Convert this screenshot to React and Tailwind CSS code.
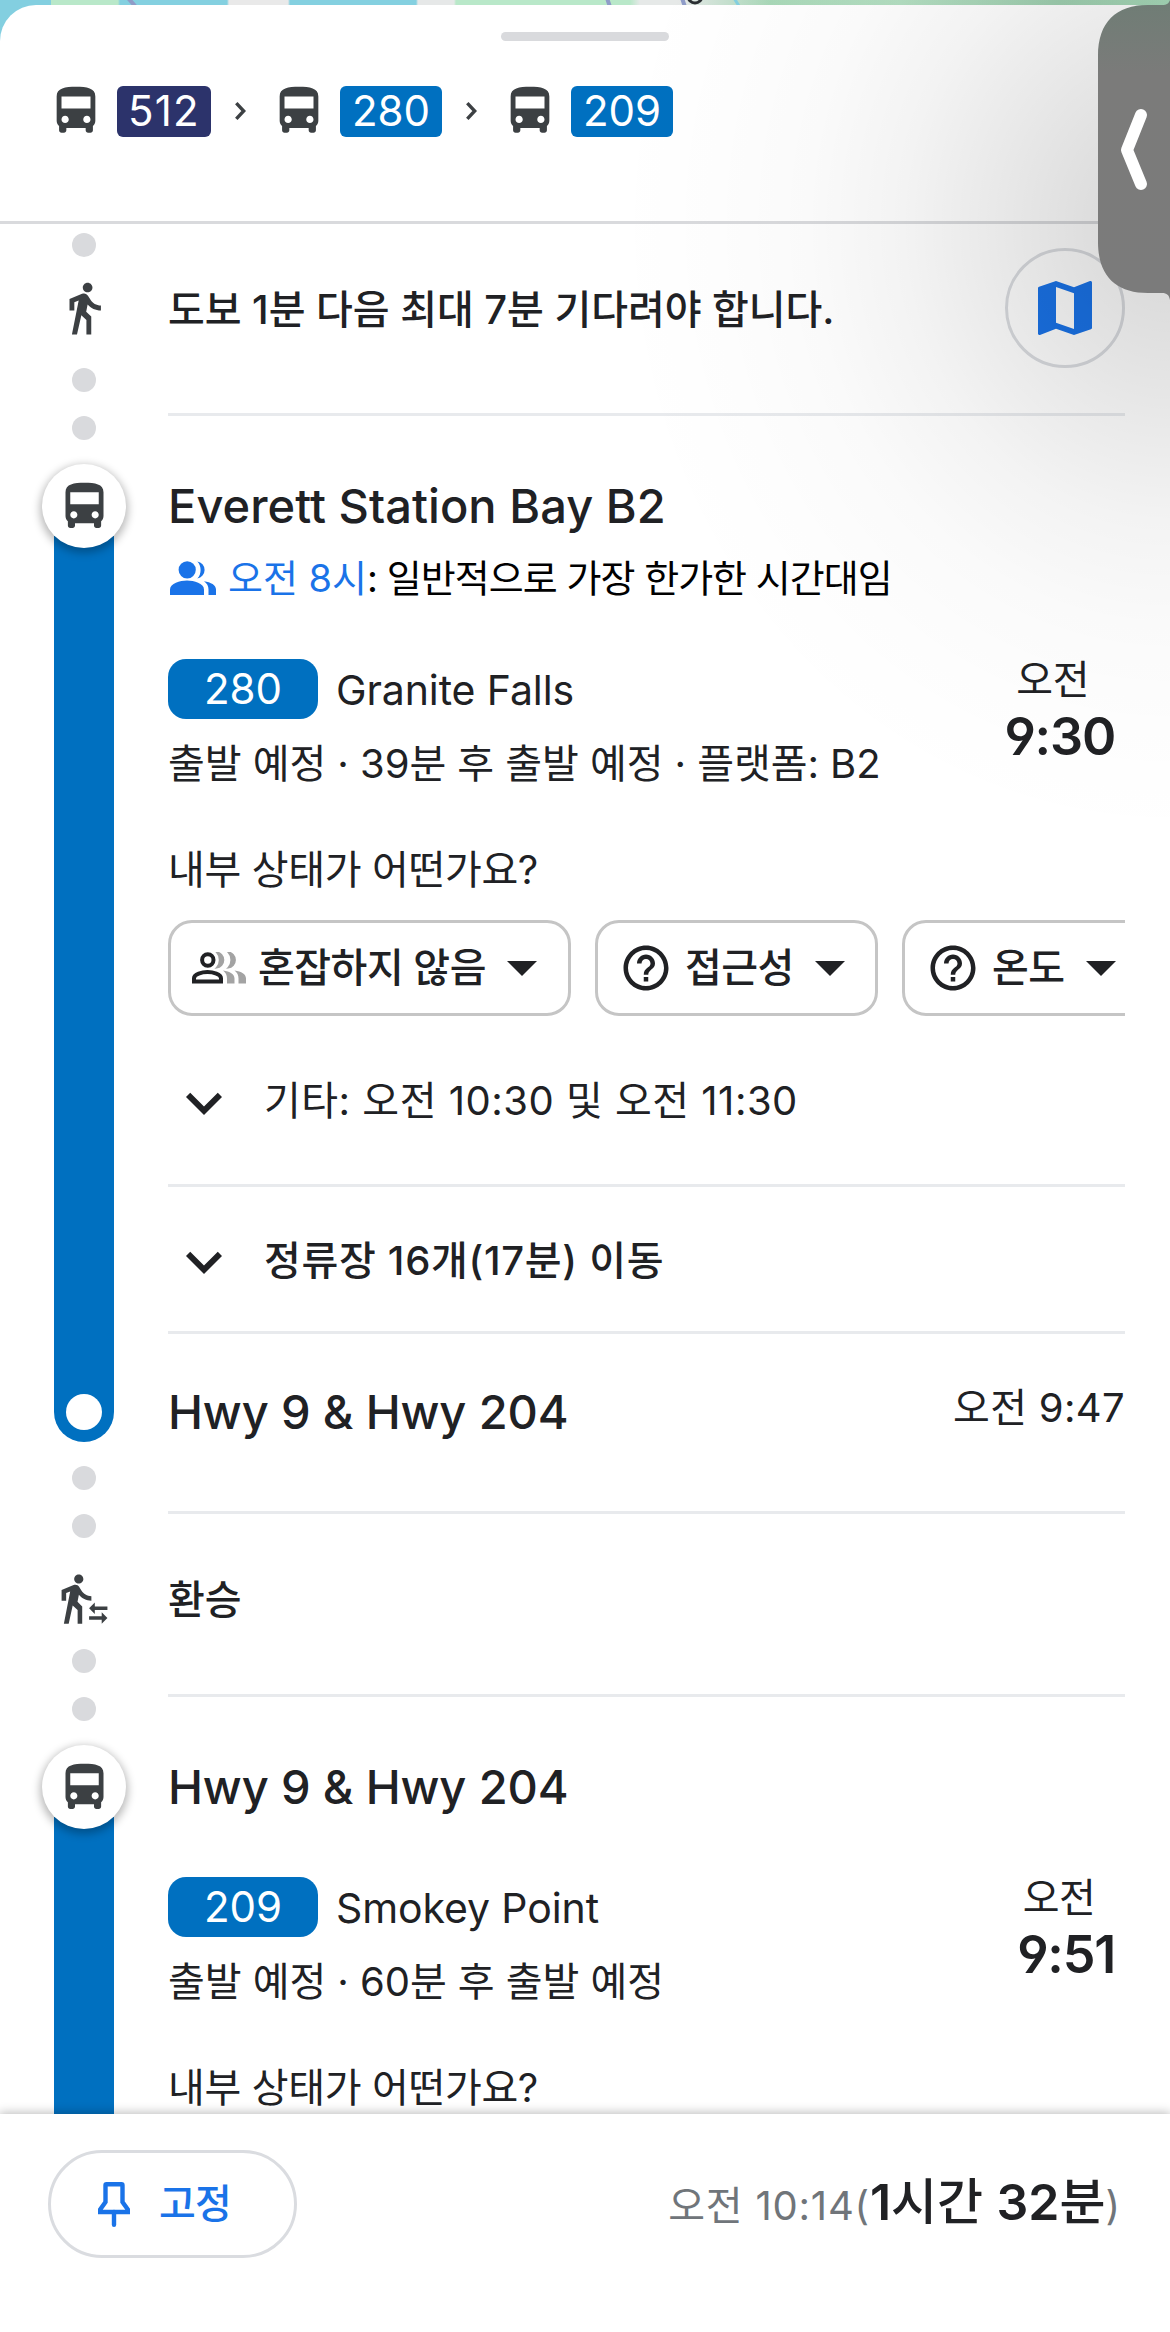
import React from "react";
import { MdExpandMore, MdHelpOutline, MdMap } from "react-icons/md";

/* ---------- icons ---------- */

const BusIcon = ({ className }) => (
  <svg viewBox="0 0 24 24" className={`shrink-0 ${className}`} fill="#3c4043">
    <path d="M4 16c0 .88.39 1.67 1 2.22V20c0 .55.45 1 1 1h1c.55 0 1-.45 1-1v-1h8v1c0 .55.45 1 1 1h1c.55 0 1-.45 1-1v-1.780c.61-.55 1-1.340 1-2.220V6c0-3.500-3.580-4-8-4s-8 .5-8 4v10zm3.500 1c-.83 0-1.500-.67-1.500-1.500S6.670 14 7.500 14s1.500.67 1.500 1.500S8.330 17 7.500 17zm9 0c-.83 0-1.500-.67-1.500-1.500s.67-1.500 1.500-1.500 1.500.67 1.500 1.500-.67 1.500-1.500 1.500zm1.500-6H6V6h12v5z" />
  </svg>
);

const WalkIcon = ({ className }) => (
  <svg viewBox="0 0 24 24" className={`shrink-0 ${className}`} fill="#3c4043">
    <path d="M13.500 5.500c1.100 0 2-.9 2-2s-.9-2-2-2-2 .9-2 2 .9 2 2 2zM9.800 8.900 7 23h2.100l1.800-8 2.100 2v6h2v-7.500l-2.100-2 .6-3C14.800 12 16.800 13 19 13v-2c-1.900 0-3.500-1-4.300-2.400l-1-1.600c-.4-.6-1-1-1.700-1-.3 0-.5.1-.8.1L6 8.300V13h2V9.600l1.800-.7" />
  </svg>
);

const TransferIcon = () => (
  <svg viewBox="0 0 24 24" className="h-[55px] w-[55px]" fill="#3c4043">
    <path d="M16.49 15.5v-1.75L14 16.25l2.49 2.5V17H22v-1.5zm3.02 4.25H14v1.5h5.51V23L22 20.5 19.51 18zM9.5 5.5c1.1 0 2-.9 2-2s-.9-2-2-2-2 .9-2 2 .9 2 2 2zM5.75 8.9 3 23h2.1l1.75-8L9 17v6h2v-7.55L8.95 13.4l.6-3C10.85 12 12.8 13 15 13v-2c-1.85 0-3.45-1-4.35-2.45l-.95-1.6C9.35 6.35 8.7 6 8 6c-.25 0-.5.05-.75.15L2 8.3V13h2V9.65l1.75-.75" />
  </svg>
);

const GroupIcon = () => (
  <svg viewBox="0 0 46 34" className="h-[34px] w-[46px] shrink-0" fill="#1a73e8">
    <circle cx="17.2" cy="8.8" r="8.6" />
    <path d="M27.3.4a8.6 8.6 0 0 1 0 17c2.3-2.2 3.3-5.3 3.3-8.5s-1-6.3-3.3-8.5z" />
    <path d="M0 34v-5.5c0-6 10-8.9 17-8.9s17 2.9 17 8.9V34z" />
    <path d="M34 20.2c7 1 12 3.8 12 8.3V34h-7.5v-5.5c0-3.4-1.6-6.3-4.5-8.3z" />
  </svg>
);

const CrowdIcon = () => (
  <svg viewBox="0 0 54 32" className="h-8 w-[54px] shrink-0" fill="none">
    <circle cx="15.8" cy="8" r="5.7" stroke="#202124" strokeWidth="4" />
    <path d="M2 29.4v-3.1c0-4 8-6.2 13.500-6.2S29 22.300 29 26.300v3.100z" stroke="#202124" strokeWidth="4" />
    <g fill="#a3a3a3">
      <path d="M24.600.2a7.800 7.800 0 0 1 0 15.500c2-2 3-4.700 3-7.700s-1-5.800-3-7.800z" strokeWidth="1.6" stroke="#a3a3a3" />
      <path d="M36.200.2a7.800 7.800 0 0 1 0 15.500c2-2 3-4.700 3-7.700s-1-5.800-3-7.800z" strokeWidth="1.6" stroke="#a3a3a3" />
      <path d="M31 18.500c7 1 11.500 3.500 11.500 8v5h-7.500v-5c0-3.200-1.200-6-4-8z" />
      <path d="M42.500 18.500c7 1 11.500 3.500 11.500 8v5h-7.500v-5c0-3.200-1.200-6-4-8z" />
    </g>
  </svg>
);

const Caret = () => (
  <svg viewBox="0 0 30 15" className="h-[15px] w-[30px] shrink-0" fill="#202124">
    <path d="M0 0h30L15 15z" />
  </svg>
);

const PinIcon = () => (
  <svg viewBox="0 0 32 45" className="h-[45px] w-8 shrink-0" fill="none" stroke="#1a73e8" strokeWidth="4.4">
    <path d="M8.500 2.300h15q1 0 1 1V20l5.300 7.500V30H2.200v-2.500L7.500 20V3.300q0-1 1-1z" />
    <path d="M16 30v12.800" strokeLinecap="round" />
  </svg>
);

const Separator = () => (
  <div className="flex w-[59px] justify-center">
    <svg viewBox="0 0 11 18" className="h-[18px] w-[11px]" fill="none" stroke="#3c4043" strokeWidth="3.4">
      <path d="M1.300 1.200 8.700 9l-7.400 7.800" />
    </svg>
  </div>
);

/* ---------- header ---------- */

const HeaderLeg = ({ children, className }) => (
  <div className="flex items-center gap-3">
    <BusIcon className="h-[58px] w-[58px]" />
    <span
      className={`flex h-[51px] items-center justify-center rounded-[6px] text-[42px] leading-none text-white ${className}`}
    >
      {children}
    </span>
  </div>
);

const Header = () => (
  <header className="flex h-[219px] flex-col border-b-[3px] border-[#d9dadd]">
    <div className="mt-[27px] h-[9px] w-[168px] self-center rounded-full bg-[#d9dadd]" />
    <div className="mt-[41px] flex items-center pl-[47px]">
      <HeaderLeg className="w-[94px] bg-[#2c336b] tracking-[1.2px]">512</HeaderLeg>
      <Separator />
      <HeaderLeg className="w-[102px] bg-[#0070c0]">280</HeaderLeg>
      <Separator />
      <HeaderLeg className="w-[102px] bg-[#0070c0]">209</HeaderLeg>
    </div>
  </header>
);

/* ---------- timeline rail ---------- */

const Dot = ({ className }) => (
  <div className={`h-6 w-6 shrink-0 rounded-full bg-[#d9dadd] ${className}`} />
);

const StopMarker = () => (
  <div className="z-10 mt-6 flex h-[84px] w-[84px] shrink-0 items-center justify-center rounded-full bg-white shadow-[0_3px_9px_2px_rgba(0,0,0,0.28)]">
    <BusIcon className="h-[57px] w-[57px]" />
  </div>
);

const Rail = () => (
  <div className="flex w-[168px] shrink-0 flex-col items-center">
    <Dot className="mt-[9px]" />
    <WalkIcon className="mt-[22px] h-[58px] w-[58px]" />
    <Dot className="mt-[31px]" />
    <Dot className="mt-6" />
    <StopMarker />
    <div className="-mt-3 flex h-[906px] w-[60px] shrink-0 items-end justify-center rounded-b-full bg-[#0070c0] pb-3">
      <div className="h-9 w-9 rounded-full bg-white" />
    </div>
    <Dot className="mt-6" />
    <Dot className="mt-6" />
    <div className="flex h-[111px] shrink-0 items-center pb-1 pt-[13px]">
      <TransferIcon />
    </div>
    <Dot className="mt-0" />
    <Dot className="mt-6" />
    <StopMarker />
    <div className="-mt-3 w-[60px] grow bg-[#0070c0]" />
  </div>
);

/* ---------- content ---------- */

const Divider = () => <div className="h-[3px] shrink-0 bg-[#e8eaed]" />;

const StopTitle = ({ children, className }) => (
  <h2 className={`h-[60px] text-[47px] font-medium leading-[60px] ${className}`}>{children}</h2>
);

const Departure = ({ line, destination, status, time }) => (
  <div className="flex justify-between">
    <div>
      <div className="flex h-[60px] items-center">
        <span className="flex h-[60px] w-[150px] items-center justify-center rounded-[18px] bg-[#0070c0] text-[42px] leading-none text-white">
          {line}
        </span>
        <span className="ml-[18px] pt-[2px] text-[41px] leading-none tracking-[-0.1px]">{destination}</span>
      </div>
      <p className="mt-5 h-[50px] text-[40px] leading-[50px] tracking-[-0.06px]">{status}</p>
    </div>
    <div className="mr-[10px] flex flex-col items-center">
      <span className="-mt-1 h-[50px] pr-[14px] text-[40px] leading-[50px] tracking-[-0.4px]">오전</span>
      <span className="mt-[2px] h-[60px] text-[52px] font-semibold leading-[60px] tracking-[-1.2px] [font-feature-settings:'cv04']">
        {time}
      </span>
    </div>
  </div>
);

const Question = () => (
  <p className="mt-14 h-[50px] text-[40px] leading-[50px] tracking-[-0.35px]">내부 상태가 어떤가요?</p>
);

const Chip = ({ icon, label, className, labelClass }) => (
  <button
    className={`flex h-24 shrink-0 items-center gap-3 rounded-[24px] border-[3px] border-[#c5c5c5] pl-[21px] text-[40px] font-medium leading-none tracking-[-0.5px] ${className}`}
  >
    {icon}
    <span className={`whitespace-nowrap ${labelClass}`}>{label}</span>
    <Caret />
  </button>
);

const HelpIcon = () => <MdHelpOutline className="h-[54px] w-[54px] shrink-0 text-[#202124]" />;

const ExpandRow = ({ children, className }) => (
  <div className={`flex items-center ${className}`}>
    <MdExpandMore className="mt-[3px] h-[72px] w-[72px] shrink-0 text-[#202124]" />
    {children}
  </div>
);

const Content = () => (
  <div className="flex w-[957px] shrink-0 flex-col">
    <div className="flex h-[189px] items-center justify-between pb-[18px]">
      <p className="text-[40px] font-medium leading-none tracking-[-0.05px]">도보 1분 다음 최대 7분 기다려야 합니다.</p>
      <button className="mb-[3px] flex h-[120px] w-[120px] items-center justify-center rounded-full border-[3px] border-[#dadce0]">
        <MdMap className="h-[72px] w-[72px] text-[#1a73e8]" />
      </button>
    </div>
    <Divider />

    <StopTitle className="mt-[60px] tracking-[0.05px]">Everett Station Bay B2</StopTitle>
    <div className="mt-[17px] flex h-[50px] items-center pl-[2px] text-[38px] text-black">
      <GroupIcon />
      <p className="ml-3 leading-[50px]">
        <span className="text-[#1a73e8]">오전 8시</span>
        <span className="tracking-[-0.97px]">: 일반적으로 가장 한가한 시간대임</span>
      </p>
    </div>
    <div className="mt-14">
      <Departure
        line="280"
        destination="Granite Falls"
        status="출발 예정 · 39분 후 출발 예정 · 플랫폼: B2"
        time="9:30"
      />
    </div>
    <Question />
    <div className="mt-[25px] flex gap-6 overflow-hidden">
      <Chip className="w-[403px]" labelClass="mr-[9px]" icon={<CrowdIcon />} label="혼잡하지 않음" />
      <Chip className="w-[283px]" labelClass="mr-[9px]" icon={<HelpIcon />} label="접근성" />
      <Chip className="w-[283px]" labelClass="mr-[9px]" icon={<HelpIcon />} label="온도" />
    </div>
    <ExpandRow className="h-[168px] pt-[2px]">
      <p className="ml-6 text-[40px] leading-none tracking-[0.5px]">기타: 오전 10:30 및 오전 11:30</p>
    </ExpandRow>
    <Divider />
    <ExpandRow className="h-36 pt-[3px]">
      <p className="ml-6 text-[40px] font-medium leading-none tracking-[0.7px]">정류장 16개(17분) 이동</p>
    </ExpandRow>
    <Divider />
    <div className="flex h-[177px] items-center justify-between pb-[21px]">
      <StopTitle className="tracking-[-0.15px]">Hwy 9 &amp; Hwy 204</StopTitle>
      <span className="pb-[9px] text-[40px] leading-none tracking-[0.33px]">오전 9:47</span>
    </div>
    <Divider />
    <div className="flex h-[180px] items-center pb-[9px]">
      <p className="text-[40px] font-medium leading-none">환승</p>
    </div>
    <Divider />

    <StopTitle className="mb-[60px] mt-[60px] tracking-[-0.15px]">Hwy 9 &amp; Hwy 204</StopTitle>
    <Departure line="209" destination="Smokey Point" status="출발 예정 · 60분 후 출발 예정" time="9:51" />
    <Question />
  </div>
);

/* ---------- bottom bar ---------- */

const BottomBar = () => (
  <footer className="z-20 flex h-[218px] items-start justify-between bg-white pl-12 pr-[50px] pt-9 shadow-[0_0_10px_1px_rgba(0,0,0,0.28)]">
    <button className="flex h-[108px] w-[249px] items-center gap-[29px] rounded-full border-[3px] border-[#dadce0] pl-[47px] text-[40px] font-medium leading-none tracking-[-0.8px] text-[#1a73e8]">
      <PinIcon />
      고정
    </button>
    <p className="flex h-[108px] items-center text-[40px] text-[#70757a]">
      <span className="leading-[60px]">
        <span className="tracking-[0.8px]">오전 10:14(</span>
        <span className="text-[50px] font-medium text-[#202124]">
          <span className="font-semibold">1</span>시간 <span className="font-semibold">32</span>분
        </span>
        )
      </span>
    </p>
  </footer>
);

/* ---------- sliver of the map above the sheet ---------- */

const MapDetails = () => (
  <svg viewBox="0 0 1170 8" className="absolute left-0 top-0 h-2 w-[1170px]" fill="none">
    <path d="M128-2l8 9M607-2l3 9M682-2l3 9" stroke="#8f9cc8" strokeWidth="4" />
    <path d="M734-2l5 8" stroke="#84d0e0" strokeWidth="3" />
    <circle cx="695" cy="-4" r="7" stroke="#2b2f33" strokeWidth="3" />
  </svg>
);

/* ---------- edge handle floating over the page ---------- */

const EdgeHandle = () => (
  <div className="pointer-events-none absolute inset-0 z-30">
    <div className="absolute inset-0 bg-[radial-gradient(ellipse_560px_620px_at_1170px_225px,rgba(0,0,0,0.17)_0%,rgba(0,0,0,0.13)_15%,rgba(0,0,0,0.085)_32%,rgba(0,0,0,0.047)_48%,rgba(0,0,0,0.021)_65%,rgba(0,0,0,0.008)_82%,rgba(0,0,0,0)_100%)]" />
    <svg viewBox="0 0 72 302" className="absolute right-0 top-0 h-[302px] w-[72px]">
      <defs>
        <linearGradient id="handle" x1="0" y1="0" x2="0" y2="1">
          <stop offset="0" stopColor="#6f7d75" />
          <stop offset="0.25" stopColor="#7b7b7a" />
          <stop offset="1" stopColor="#7b7b7b" />
        </linearGradient>
      </defs>
      <path
        fill="url(#handle)"
        d="M72 0C71 3 69 5 64 5H50C18 5 0 22 0 56V242C0 276 18 293 50 293H64C69 293 71 295 72 300Z"
      />
      <path
        d="M43 115 29 150l14 34"
        fill="none"
        stroke="#fff"
        strokeWidth="12"
        strokeLinecap="round"
        strokeLinejoin="round"
      />
    </svg>
  </div>
);

export default function App() {
  return (
    <div className="relative h-[2332px] w-[1170px] overflow-hidden bg-[linear-gradient(90deg,#83cfe0_51px,#b9e8c9_51px,#b9e8c9_118px,#84d0e0_120px,#84d0e0_227px,#e9e9e9_229px,#e9e9e9_288px,#84d0e0_290px,#84d0e0_416px,#e6e8e8_418px,#e6e8e8_454px,#b9e8c9_456px,#b9e8c9_630px,#e6e9e8_640px,#e6e9e8_680px,#a9d8b8_770px,#b4dfc2_900px,#9fcfb0_1060px,#a9dcbb_1170px)] font-['Inter','Noto_Sans_CJK_KR',sans-serif] text-[#202124]">
      <MapDetails />
      <div className="relative flex h-[2332px] flex-col pt-[5px]">
        <div className="flex min-h-0 grow flex-col rounded-t-[36px] bg-white">
          <Header />
          <main className="flex min-h-0 grow overflow-hidden">
            <Rail />
            <Content />
          </main>
          <BottomBar />
        </div>
      </div>
      <EdgeHandle />
    </div>
  );
}
